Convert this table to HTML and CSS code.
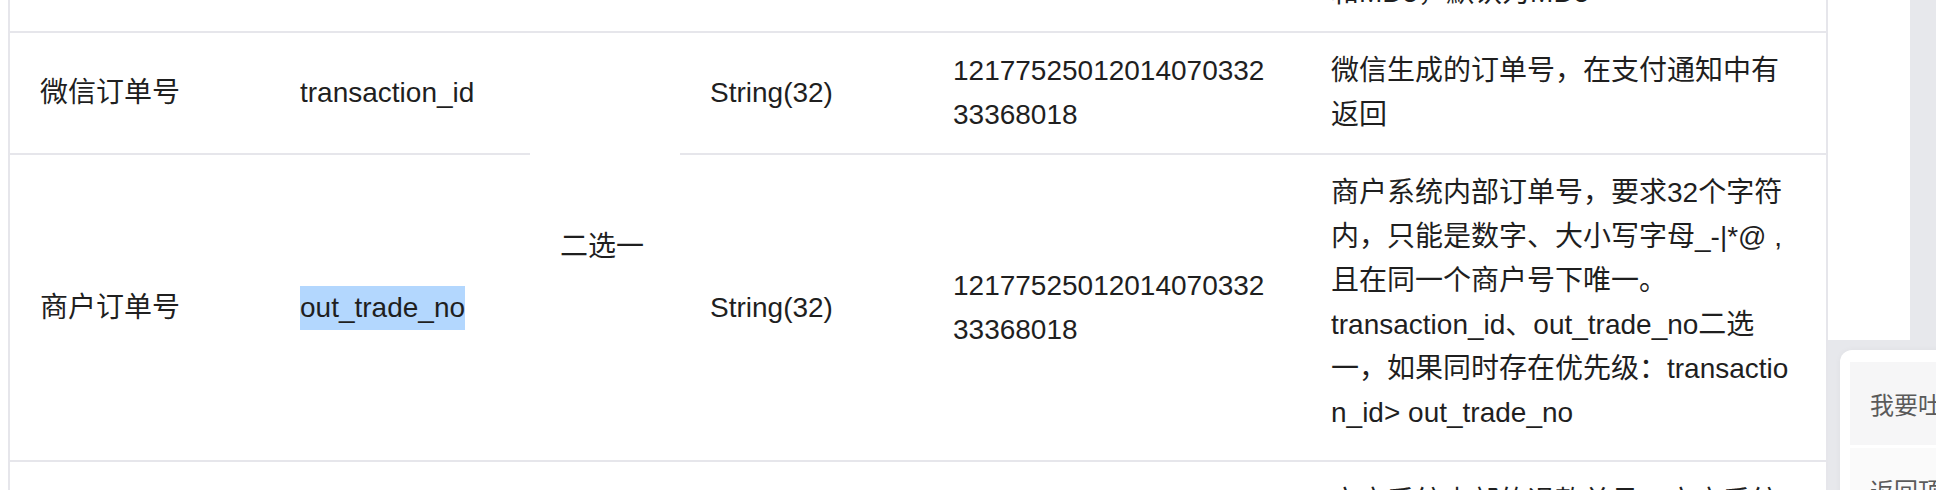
FILE: index.html
```html
<!DOCTYPE html>
<html lang="zh-CN">
<head>
<meta charset="utf-8">
<title>申请退款 参数</title>
<link rel="stylesheet" href="styles.css">
</head>
<body>
<div class="page">
  <main class="doc">
    <table class="params">
      <colgroup>
        <col class="c-name">
        <col class="c-var">
        <col class="c-req">
        <col class="c-type">
        <col class="c-example">
        <col class="c-desc">
      </colgroup>
      <tbody>
        <tr>
          <td>签名类型</td>
          <td>sign_type</td>
          <td>否</td>
          <td>String(32)</td>
          <td>HMAC-SHA256</td>
          <td>签名类型，目前支持HMAC-SHA256和MD5，默认为MD5</td>
        </tr>
        <tr>
          <td>微信订单号</td>
          <td>transaction_id</td>
          <td class="req" rowspan="2">二选一</td>
          <td>String(32)</td>
          <td class="num">1217752501201407033233368018</td>
          <td>微信生成的订单号，在支付通知中有返回</td>
        </tr>
        <tr>
          <td>商户订单号</td>
          <td><span class="selected">out_trade_no</span></td>
          <td>String(32)</td>
          <td class="num">1217752501201407033233368018</td>
          <td class="desc-long">商户系统内部订单号，要求32个字符内，只能是数字、大小写字母_-|*@ ,且在同一个商户号下唯一。<br>transaction_id、out_trade_no二选一，如果同时存在优先级：transaction_id&gt; out_trade_no</td>
        </tr>
        <tr>
          <td>商户退款单号</td>
          <td>out_refund_no</td>
          <td>是</td>
          <td>String(64)</td>
          <td class="num">1217752501201407033233368018</td>
          <td class="desc-top">商户系统内部的退款单号，商户系统内部唯一，只能是数字、大小写字母_-|*@ ,同一退款单号多次请求只退一笔。</td>
        </tr>
      </tbody>
    </table>
  </main>
  <aside class="side"></aside>
  <div class="float-panel">
    <div class="fp-item">我要吐槽</div>
    <div class="fp-item fp-light">返回顶部</div>
  </div>
</div>
</body>
</html>
```

FILE: styles.css
```css
* { box-sizing: border-box; }

html, body {
  margin: 0;
  padding: 0;
  height: 490px;
  overflow: hidden;
}

body {
  background: #e7e8ec;
  font-family: "Liberation Sans", "Noto Sans CJK SC", sans-serif;
  color: #1f1f1f;
}

.page {
  position: relative;
  display: flex;
  align-items: flex-start;
  height: 490px;
  overflow: hidden;
}

.doc {
  width: 1828px;
  height: 490px;
  background: #ffffff;
  padding-left: 8px;
  overflow: hidden;
  flex: none;
}

.side {
  width: 82px;
  height: 340px;
  background: #ffffff;
  flex: none;
}

.params {
  width: 1820px;
  table-layout: fixed;
  border-collapse: separate;
  border-spacing: 0;
  border-left: 2px solid #e6e6eb;
  border-right: 2px solid #e6e6eb;
  margin-top: -89px;
  font-size: 28px;
  line-height: 44px;
}

.c-name { width: 260px; }
.c-var { width: 260px; }
.c-req { width: 150px; }
.c-type { width: 243px; }
.c-example { width: 378px; }
.c-desc { width: 525px; }

.params td {
  padding: 16px 30px;
  vertical-align: middle;
  border-bottom: 2px solid #e6e6eb;
  word-break: break-all;
  text-align: left;
}

.params td.desc-long {
  padding-bottom: 25px;
}

.params td.desc-top {
  padding-top: 18px;
  vertical-align: top;
}

.selected {
  display: inline-block;
  background: #b3d7fe;
  line-height: 44px;
}

.float-panel {
  position: absolute;
  left: 1840px;
  top: 350px;
  width: 160px;
  height: 200px;
  background: #ffffff;
  border-radius: 12px;
  padding: 12px 10px;
  box-shadow: 0 0 6px rgba(0, 0, 0, 0.04);
}

.fp-item {
  height: 83px;
  padding-left: 20px;
  display: flex;
  align-items: center;
  background: #f6f6f7;
  font-size: 24px;
  color: #5a5a5a;
  white-space: nowrap;
  margin-bottom: 3px;
}

.fp-light {
  background: #fafafa;
}
```
